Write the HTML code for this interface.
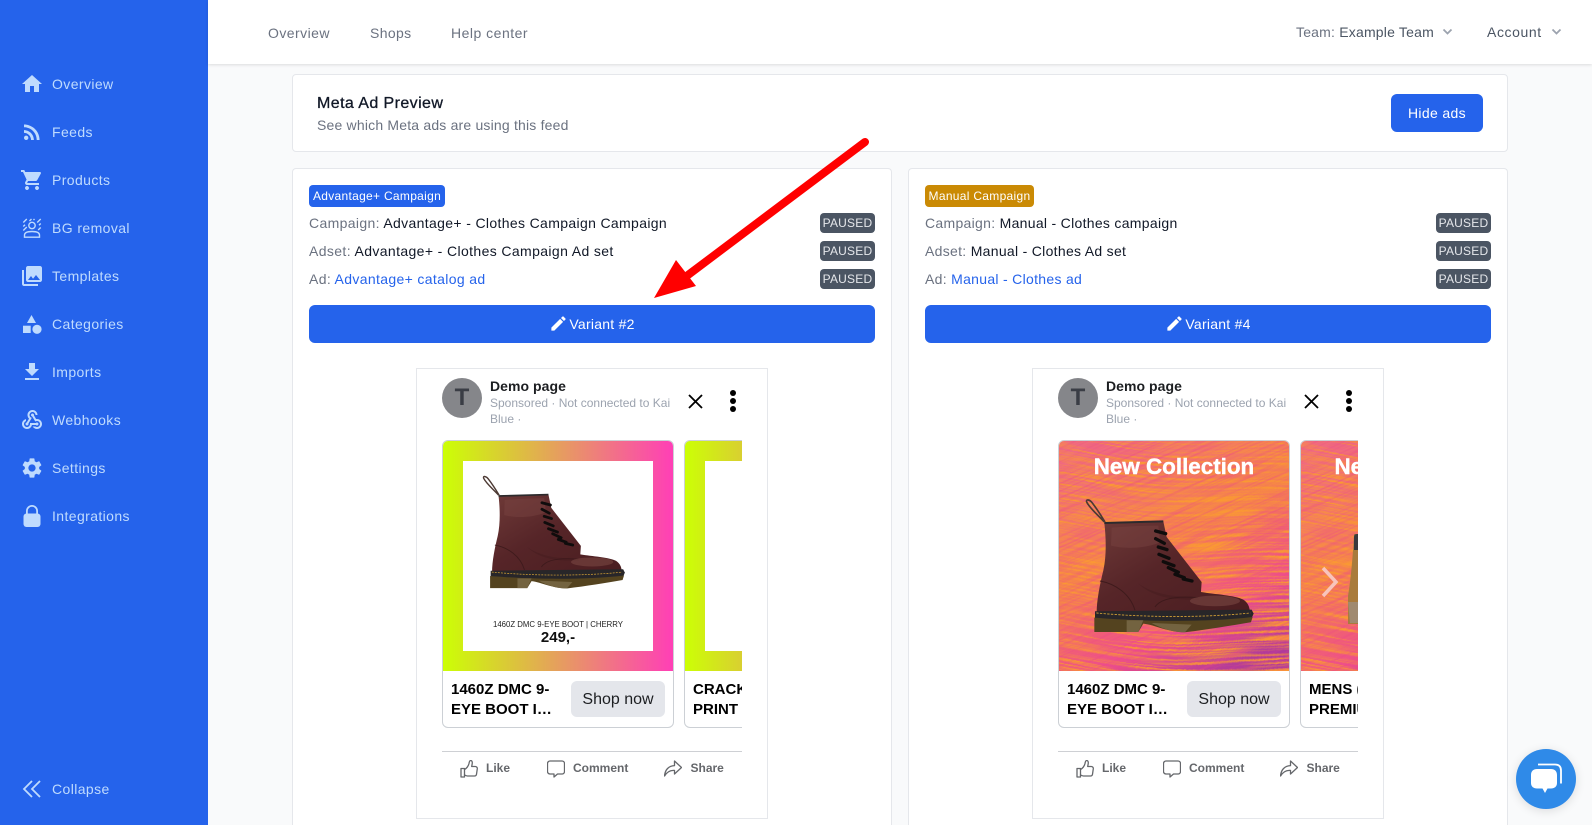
<!DOCTYPE html>
<html lang="en"><head><meta charset="utf-8"><title>Meta Ad Preview</title>
<style>
*{box-sizing:border-box;margin:0;padding:0}
html,body{width:1592px;height:825px;overflow:hidden;background:#f9fafb;font-family:"Liberation Sans",Arial,sans-serif;color:#111827}
#root{position:absolute;left:0;top:0;width:1592px;height:825px;overflow:hidden;background:#f9fafb}
.a{position:absolute}
.t{position:absolute;white-space:nowrap;line-height:20px;font-size:14px;letter-spacing:.35px}
#side{position:absolute;left:0;top:0;width:208px;height:825px;background:#2563eb}
#side svg{position:absolute;left:20px;width:24px;height:24px;fill:#bfdbfe}
#side .t{left:52px;color:#bfdbfe;letter-spacing:.4px}
#head{position:absolute;left:208px;top:0;width:1384px;height:64px;background:#fff;box-shadow:0 1px 3px rgba(0,0,0,.12);z-index:5}
.bd{position:absolute;background:#fff;border:1px solid #e5e7eb;border-radius:4px}
.col{position:absolute;top:168px;width:600px;height:657px;overflow:hidden}
.col>.bd{left:0;top:0;width:600px;height:657px;border-bottom:0;border-radius:4px 4px 0 0}
.badge{position:absolute;left:17px;top:17px;height:22px;border-radius:4px;color:#fff;font-size:12px;line-height:22px;text-align:center;letter-spacing:.3px;white-space:nowrap}
.k{color:#6b7280}.v{color:#111827}.l{color:#2563eb}
.p{position:absolute;left:528px;width:55px;height:20px;background:#4b5563;color:#e5e7eb;font-size:12px;line-height:20px;text-align:center;border-radius:4px;letter-spacing:.2px}
.btn{position:absolute;left:17px;top:137px;width:566px;height:38px;background:#2563eb;border-radius:6px;color:#fff;font-size:14px;line-height:38px;text-align:center;letter-spacing:.25px}
.btn svg{width:19px;height:19px;fill:#fff;vertical-align:-4px;margin-right:1px}
.frame{position:absolute;left:124px;top:199.500px;width:352px;height:451px;background:#fff;border:1px solid #e5e7eb}
.av{position:absolute;left:150px;top:210px;width:40px;height:40px;border-radius:50%;background:#85868a;color:#3a3d45;font-weight:700;font-size:24px;line-height:40px;text-align:center}
.dp{left:198px;top:208px;font-weight:700;font-size:14px;color:#1c1e21;letter-spacing:.05px}
.sp{left:198px;font-size:12px;color:#9ca3af;letter-spacing:0}
.car{position:absolute;left:150px;top:272px;width:300px;height:288px;overflow:hidden}
.cd{position:absolute;top:0;width:232px;height:288px;background:#fff;border:1px solid #ccd0d5;border-radius:6px;overflow:hidden}
.im{position:absolute;left:0;top:0;width:230px;height:230px;overflow:hidden}
.gr{background:linear-gradient(90deg,#ccff05,#ff3fb6)}
.wh{position:absolute;left:20px;top:20px;width:190px;height:190px;background:#fff}
.ti{position:absolute;left:8px;top:238.500px;font-weight:700;font-size:15px;line-height:20px;color:#000;white-space:nowrap}
.sh{position:absolute;left:128px;top:240px;width:94px;height:36px;background:#e4e6eb;border-radius:6px;font-size:16px;line-height:37px;text-align:center;color:#1c1e21}
.dv{position:absolute;left:150px;top:583px;width:300px;height:1px;background:#ced0d4}
.ac{top:590px;font-size:12px;font-weight:700;color:#65676b;letter-spacing:0}
.ic{position:absolute;top:592px;width:18px;height:18px;fill:none;stroke:#65676b;stroke-width:1.3;stroke-linejoin:round;stroke-linecap:round}
.x{position:absolute;left:395.500px;top:226px;width:15px;height:15px}
.dots{position:absolute;left:437px;top:221px;width:8px;height:24px}
.nv{color:#6b7280;top:22.500px}
</style></head><body>
<div id="root">
<svg width="0" height="0" style="position:absolute">
<defs>
<linearGradient id="lea" x1="0" y1="0" x2="1" y2="1"><stop offset="0" stop-color="#6f3a38"/><stop offset=".45" stop-color="#562528"/><stop offset="1" stop-color="#4a1d20"/></linearGradient>
<symbol id="boot" viewBox="90 170 520 415">
<path d="M148 245C130 225 105 205 95 185c-3-10 10-7 17 3 13 17 26 37 38 57" fill="none" stroke="#4d3a34" stroke-width="5"/>
<path d="M148 248l177-5 10 47 105 135-2 30c42 7 102 10 127 23 15 10 18 22 20 34l-460 6c0-38 10-88 20-128 10-45 8-100 3-142z" fill="url(#lea)"/>
<path d="M170 262c50-4 100-6 140-6l6 50c-50 20-110 20-148 10z" fill="#7a4442" opacity=".45"/>
<path d="M135 422c45 8 90 38 105 88" fill="none" stroke="#3e1a1c" stroke-width="3"/>
<path d="M300 500c20-30 80-32 130-28" fill="none" stroke="#3e1a1c" stroke-width="3"/>
<path d="M250 430c60 40 130 40 185 40l-3 8c-60 0-130 0-182-48z" fill="#3e1a1c" opacity=".35"/>
<ellipse cx="480" cy="482" rx="75" ry="16" fill="#7d4a46" opacity=".55"/>
<path d="M148 248l177-5" stroke="#2c2a2c" stroke-width="6" fill="none"/>
<path d="M120 513l470-5 6 12-6 14c-150 16-330 16-470 2z" fill="#282629"/>
<path d="M124 518c150 14 330 14 462 0" fill="none" stroke="#d7a336" stroke-width="2.500" stroke-dasharray="7 4"/>
<path d="M118 532c120 10 320 16 475-2l-5 16c-60 10-130 22-198 30-50 0-90-22-125-26l-15 25H118z" fill="#54431f"/>
<path d="M215 540h50l-15 35h-35zM290 548l120 5-20 23c-40 0-75-14-100-28z" fill="#7b6c48" opacity=".8"/>
<g stroke="#0f0c0c" stroke-width="10" stroke-linecap="round" fill="none"><path d="M302 272l30 8M302 295l26 14M310 320l26 8M312 342l30 12M325 364l32 12M340 382l30 14M360 402l28 10M385 416l26 6"/></g>
</symbol>
<linearGradient id="og" x1=".25" y1="0" x2=".75" y2="1"><stop offset="0" stop-color="#f06a80"/><stop offset=".42" stop-color="#f5804e"/><stop offset=".76" stop-color="#ee4f8a"/><stop offset="1" stop-color="#b03a9a"/></linearGradient>
<filter id="st" x="0" y="0" width="100%" height="100%" color-interpolation-filters="sRGB"><feTurbulence type="fractalNoise" baseFrequency="0.01 0.42" numOctaves="2" seed="4" result="n"/><feColorMatrix in="n" values="0 0 0 0 .98  0 0 0 0 .6  0 0 0 0 .2  3.4 0 0 0 -1.4" result="s"/><feTurbulence type="fractalNoise" baseFrequency="0.005" numOctaves="1" seed="2" result="w"/><feDisplacementMap in="s" in2="w" scale="40" xChannelSelector="R" yChannelSelector="G"/></filter>
<filter id="st2" x="0" y="0" width="100%" height="100%" color-interpolation-filters="sRGB"><feTurbulence type="fractalNoise" baseFrequency="0.012 0.42" numOctaves="2" seed="9" result="n"/><feColorMatrix in="n" values="0 0 0 0 .92  0 0 0 0 .27  0 0 0 0 .55  3.2 0 0 0 -1.4"/></filter>
<symbol id="fire" viewBox="0 0 230 230" preserveAspectRatio="none">
<rect width="230" height="230" fill="url(#og)"/>
<rect x="-80" y="-80" width="400" height="400" filter="url(#st)" transform="rotate(4 115 115)"/>
<rect x="-80" y="-80" width="400" height="400" filter="url(#st2)" transform="rotate(-24 115 115)" opacity=".4"/>
</symbol>
<symbol id="like" viewBox="0 0 18 18"><path d="M1 8.500h3.500V17H1z"/><path d="M4.500 9.500c2-1 4-3.500 4.500-6 .2-1.200.5-3 1.700-3 1.300 0 1.800 1.500 1.500 3.200l-.5 2.800h3.600c1.300 0 2.100 1 2 2.200l-.8 5.600c-.2 1.200-1 1.700-2 1.700H7.500c-1 0-2-.6-3-1"/></symbol>
<symbol id="com" viewBox="0 0 18 18"><path d="M3 1h12a2.500 2.500 0 0 1 2.500 2.500v8A2.500 2.500 0 0 1 15 14h-4.500L7 17v-3H3A2.500 2.500 0 0 1 .5 11.500v-8A2.500 2.500 0 0 1 3 1z"/></symbol>
<symbol id="shr" viewBox="0 0 18 18"><path d="M10.500 1l7 6.500-7 6.500v-3.600c-4.500-.4-7.500 1.400-10 5.600.5-6 4-10.200 10-10.400z"/></symbol>
<symbol id="pen" viewBox="0 0 24 24"><path d="M3 17.250V21h3.750L17.810 9.940l-3.750-3.750L3 17.250zM20.710 7.040c.39-.39.39-1.020 0-1.410l-2.340-2.340c-.39-.39-1.020-.39-1.410 0l-1.830 1.830 3.750 3.750 1.830-1.830z"/></symbol>
<symbol id="xx" viewBox="0 0 15 15"><path d="M1 1l13 13M14 1L1 14" stroke="#000" stroke-width="1.800" fill="none"/></symbol>
<symbol id="dd" viewBox="0 0 8 24"><circle cx="4" cy="4" r="3" fill="#000"/><circle cx="4" cy="12" r="3" fill="#000"/><circle cx="4" cy="20" r="3" fill="#000"/></symbol>
</defs></svg>

<div id="side">
<svg style="top:72px" viewBox="0 0 24 24"><path d="M10 20v-6h4v6h5v-8h3L12 3 2 12h3v8z"/></svg><div class="t" style="top:74px">Overview</div>
<svg style="top:120px" viewBox="0 0 24 24"><path d="M6.180 15.640a2.180 2.180 0 1 1 0 4.360 2.180 2.180 0 0 1 0-4.360zM4 4.440v2.830c7.030 0 12.730 5.700 12.730 12.730h2.830c0-8.590-6.970-15.560-15.560-15.560zm0 5.660v2.830c3.900 0 7.070 3.170 7.070 7.070h2.830c0-5.470-4.430-9.900-9.900-9.900z"/></svg><div class="t" style="top:122px">Feeds</div>
<svg style="top:168px" viewBox="0 0 24 24"><path d="M7 18c-1.100 0-1.990.9-1.990 2S5.900 22 7 22s2-.9 2-2-.9-2-2-2zM1 2v2h2l3.600 7.590-1.350 2.450c-.16.280-.25.610-.25.960 0 1.100.9 2 2 2h12v-2H7.420c-.14 0-.25-.11-.25-.25l.03-.12.9-1.630h7.450c.75 0 1.410-.41 1.750-1.030l3.580-6.490c.08-.14.120-.31.120-.48 0-.55-.45-1-1-1H5.210l-.94-2H1zm16 16c-1.100 0-1.990.9-1.990 2s.89 2 1.990 2 2-.9 2-2-.9-2-2-2z"/></svg><div class="t" style="top:170px">Products</div>
<svg style="top:216px" viewBox="0 0 24 24"><g fill="none" stroke="#bfdbfe" stroke-width="1.400"><circle cx="12" cy="9.500" r="3.200"/><path d="M4.500 21.200v-2c0-2.400 3-3.700 7.500-3.700s7.500 1.300 7.500 3.700v2z"/><path d="M3.300 6.500L6.800 3M3.300 10.500L5 8.800M3.300 14.500l3.500-3.500M9.500 5l2-2M20.700 3l-3.500 3.500M20.700 7.500L19 9.200M20.700 11.500l-2.500 2.500M14.500 3l-1 1"/></g></svg><div class="t" style="top:218px">BG removal</div>
<svg style="top:264px" viewBox="0 0 24 24"><path d="M22 16V4c0-1.100-.9-2-2-2H8c-1.100 0-2 .9-2 2v12c0 1.100.9 2 2 2h12c1.100 0 2-.9 2-2zm-11-4l2.030 2.710L16 11l4 5H8l3-4zM2 6v14c0 1.100.9 2 2 2h14v-2H4V6H2z"/></svg><div class="t" style="top:266px">Templates</div>
<svg style="top:312px" viewBox="0 0 24 24"><path d="M11.500 3l-4.500 8h9z"/><circle cx="17" cy="17.300" r="4.600"/><path d="M3 13.700h7.700V21H3z"/></svg><div class="t" style="top:314px">Categories</div>
<svg style="top:360px" viewBox="0 0 24 24"><path d="M19 9h-4V3H9v6H5l7 7 7-7zM5 18v2h14v-2H5z"/></svg><div class="t" style="top:362px">Imports</div>
<svg style="top:408px" viewBox="0 0 24 24"><path d="M10 15h5.880c.27-.31.67-.5 1.120-.5.830 0 1.500.670 1.500 1.500s-.67 1.500-1.500 1.500c-.44 0-.84-.19-1.120-.5H11.900c-.46 2.280-2.480 4-4.900 4-2.760 0-5-2.240-5-5 0-2.420 1.720-4.440 4-4.900v2.070c-1.160.41-2 1.530-2 2.830 0 1.650 1.350 3 3 3s3-1.350 3-3v-1zm2.500-11c1.650 0 3 1.350 3 3h2c0-2.760-2.240-5-5-5s-5 2.240-5 5c0 1.430.6 2.710 1.550 3.620l-2.350 3.900c-.68.14-1.200.75-1.200 1.480 0 .830.67 1.500 1.500 1.500s1.500-.67 1.500-1.500c0-.16-.02-.31-.07-.45l3.380-5.630C10.490 9.610 9.500 8.420 9.500 7c0-1.650 1.350-3 3-3zm4.500 9c-.64 0-1.230.2-1.720.54l-3.050-5.070C11.530 8.350 11 7.740 11 7c0-.83.67-1.500 1.500-1.500S14 6.170 14 7c0 .15-.02.29-.06.43l2.190 3.650c.28-.05.57-.08.87-.08 2.760 0 5 2.240 5 5s-2.240 5-5 5c-1.850 0-3.470-1.010-4.330-2.500h2.670c.48.32 1.050.5 1.660.5 1.650 0 3-1.350 3-3s-1.350-3-3-3z"/></svg><div class="t" style="top:410px">Webhooks</div>
<svg style="top:456px" viewBox="0 0 24 24"><path d="M19.140 12.940c.04-.3.060-.61.060-.94 0-.32-.02-.64-.07-.94l2.030-1.580c.18-.14.230-.41.120-.61l-1.920-3.320c-.12-.22-.37-.29-.59-.22l-2.390.96c-.5-.38-1.030-.7-1.620-.94l-.36-2.540c-.04-.24-.24-.41-.48-.41h-3.840c-.24 0-.43.170-.47.410l-.36 2.540c-.59.240-1.130.570-1.620.940l-2.390-.96c-.22-.08-.47 0-.59.220L2.740 8.870c-.12.210-.08.470.120.610l2.030 1.580c-.05.3-.09.630-.09.940s.02.640.07.940l-2.030 1.580c-.18.140-.23.410-.12.610l1.920 3.320c.12.220.37.290.59.220l2.390-.96c.5.380 1.030.7 1.620.94l.36 2.540c.05.240.24.410.48.410h3.840c.24 0 .44-.17.47-.41l.36-2.540c.59-.24 1.130-.56 1.620-.94l2.390.96c.22.080.47 0 .59-.22l1.920-3.320c.12-.22.070-.47-.12-.61l-2.010-1.580zM12 15.600c-1.980 0-3.600-1.620-3.600-3.600s1.620-3.600 3.600-3.600 3.600 1.620 3.600 3.600-1.620 3.600-3.600 3.600z"/></svg><div class="t" style="top:458px">Settings</div>
<svg style="top:504px" viewBox="0 0 24 24"><path d="M6 11V7a6 6 0 0 1 12 0v4h-1.800V7a4.200 4.200 0 0 0-8.400 0v4z"/><rect x="3.500" y="9.500" width="17" height="13.500" rx="3"/></svg><div class="t" style="top:506px">Integrations</div>
<svg style="top:777px" viewBox="0 0 24 24"><path d="M12 4l-8 8 8 8M20 4l-8 8 8 8" fill="none" stroke="#bfdbfe" stroke-width="1.800"/></svg><div class="t" style="top:779px">Collapse</div>
</div>

<div id="head">
<div class="t nv" style="left:60px;letter-spacing:.45px">Overview</div>
<div class="t nv" style="left:162px">Shops</div>
<div class="t nv" style="left:243px;letter-spacing:.5px">Help center</div>
<div class="t" style="left:1088px;top:22px;color:#6b7280;letter-spacing:.2px">Team: <span style="color:#4b5563">Example Team</span></div>
<svg class="a" style="left:1234px;top:28px" width="11" height="8" viewBox="0 0 11 8"><path d="M1.500 1.500l4 4 4-4" fill="none" stroke="#9ca3af" stroke-width="1.800"/></svg>
<div class="t" style="left:1279px;top:22px;color:#4b5563;letter-spacing:.6px">Account</div>
<svg class="a" style="left:1343px;top:28px" width="11" height="8" viewBox="0 0 11 8"><path d="M1.500 1.500l4 4 4-4" fill="none" stroke="#9ca3af" stroke-width="1.800"/></svg>
</div>

<div class="bd" style="left:292px;top:74px;width:1216px;height:78px"></div>
<div class="t" style="left:317px;top:93.500px;font-size:16px;color:#111827;letter-spacing:.42px;-webkit-text-stroke:.3px #111827">Meta Ad Preview</div>
<div class="t" style="left:317px;top:115px;color:#6b7280;letter-spacing:.19px">See which Meta ads are using this feed</div>
<div class="a" style="left:1391px;top:94px;width:92px;height:38px;background:#2563eb;border-radius:6px;color:#fff;font-size:14px;line-height:38px;text-align:center;letter-spacing:.35px">Hide ads</div>

<div class="col" style="left:292px">
<div class="bd"></div>
<div class="badge" style="width:136px;background:#2563eb">Advantage+ Campaign</div>
<div class="t" style="left:17px;top:45px"><span class="k">Campaign:</span> <span class="v">Advantage+ - Clothes Campaign Campaign</span></div>
<div class="t" style="left:17px;top:73px;letter-spacing:.38px"><span class="k">Adset:</span> <span class="v">Advantage+ - Clothes Campaign Ad set</span></div>
<div class="t" style="left:17px;top:101px"><span class="k">Ad:</span> <span class="l">Advantage+ catalog ad</span></div>
<div class="p" style="top:45px">PAUSED</div><div class="p" style="top:73px">PAUSED</div><div class="p" style="top:101px">PAUSED</div>
<div class="btn"><svg><use href="#pen"/></svg>Variant #2</div>
<div class="frame"></div>
<div class="av">T</div>
<div class="t dp">Demo page</div>
<div class="t sp" style="top:225px">Sponsored · Not connected to Kai</div>
<div class="t sp" style="top:240.500px">Blue ·</div>
<svg class="x"><use href="#xx"/></svg><svg class="dots"><use href="#dd"/></svg>
<div class="car">
 <div class="cd" style="left:0">
  <div class="im gr"><div class="wh"></div>
   <svg class="a" style="left:39px;top:33px" width="147" height="117"><use href="#boot" width="147" height="117"/></svg>
   <div class="a" style="left:20px;width:190px;top:179px;text-align:center;font-size:7.800px;line-height:10px;color:#222;white-space:nowrap">1460Z DMC 9-EYE BOOT | CHERRY</div>
   <div class="a" style="left:20px;width:190px;top:189px;text-align:center;font-size:15px;line-height:16px;font-weight:700;color:#111">249,-</div>
  </div>
  <div class="ti">1460Z DMC 9-<br>EYE BOOT I…</div><div class="sh">Shop now</div>
 </div>
 <div class="cd" style="left:242px">
  <div class="im gr"><div class="wh"></div></div>
  <div class="ti">CRACK<br>PRINT</div>
 </div>
</div>
<svg class="a" style="left:412px;top:397px" width="20" height="34" viewBox="0 0 20 34"><path d="M2 2l15 15L2 32" fill="none" stroke="#fff" stroke-opacity=".85" stroke-width="1.200"/></svg>
<div class="dv"></div>
<svg class="ic" style="left:168px"><use href="#like"/></svg><div class="t ac" style="left:194px">Like</div>
<svg class="ic" style="left:255px"><use href="#com"/></svg><div class="t ac" style="left:281px">Comment</div>
<svg class="ic" style="left:372px"><use href="#shr"/></svg><div class="t ac" style="left:398.500px">Share</div>
</div>

<div class="col" style="left:908px">
<div class="bd"></div>
<div class="badge" style="width:109px;background:#ca8a04">Manual Campaign</div>
<div class="t" style="left:17px;top:45px;letter-spacing:.3px"><span class="k">Campaign:</span> <span class="v">Manual - Clothes campaign</span></div>
<div class="t" style="left:17px;top:73px;letter-spacing:.3px"><span class="k">Adset:</span> <span class="v">Manual - Clothes Ad set</span></div>
<div class="t" style="left:17px;top:101px;letter-spacing:.3px"><span class="k">Ad:</span> <span class="l">Manual - Clothes ad</span></div>
<div class="p" style="top:45px">PAUSED</div><div class="p" style="top:73px">PAUSED</div><div class="p" style="top:101px">PAUSED</div>
<div class="btn"><svg><use href="#pen"/></svg>Variant #4</div>
<div class="frame"></div>
<div class="av">T</div>
<div class="t dp">Demo page</div>
<div class="t sp" style="top:225px">Sponsored · Not connected to Kai</div>
<div class="t sp" style="top:240.500px">Blue ·</div>
<svg class="x"><use href="#xx"/></svg><svg class="dots"><use href="#dd"/></svg>
<div class="car">
 <div class="cd" style="left:0">
  <div class="im"><svg width="230" height="230"><use href="#fire" width="230" height="230"/></svg>
   <div class="a" style="left:0;width:230px;top:13px;text-align:center;font-size:22.400px;line-height:26px;font-weight:700;color:#fff;white-space:nowrap;-webkit-text-stroke:.4px #fff">New Collection</div>
   <svg class="a" style="left:26px;top:55.700px" width="173.300" height="138.300"><use href="#boot" width="173.300" height="138.300"/></svg>
  </div>
  <div class="ti">1460Z DMC 9-<br>EYE BOOT I…</div><div class="sh">Shop now</div>
 </div>
 <div class="cd" style="left:242px">
  <div class="im"><svg width="230" height="230"><use href="#fire" width="230" height="230"/></svg>
   <div class="a" style="left:33.500px;top:13px;font-size:22.400px;line-height:26px;font-weight:700;color:#fff;white-space:nowrap;-webkit-text-stroke:.4px #fff">New Collection</div>
   <svg class="a" style="left:47px;top:93px" width="20" height="90" viewBox="0 0 20 90"><path d="M6 0h14v90H0V62C3 45 5 20 6 0z" fill="#a97b3c"/><path d="M6 3q0-3 3-3h11v16H6z" fill="#3a3a3e"/><path d="M0 68h20v21H2z" fill="#a08a70"/></svg>
  </div>
  <div class="ti">MENS (<br>PREMIUM</div>
 </div>
</div>
<svg class="a" style="left:412px;top:397px" width="20" height="34" viewBox="0 0 20 34"><path d="M3 3l13 14L3 31" fill="none" stroke="#f8c4bc" stroke-width="3.500"/></svg>
<div class="dv"></div>
<svg class="ic" style="left:168px"><use href="#like"/></svg><div class="t ac" style="left:194px">Like</div>
<svg class="ic" style="left:255px"><use href="#com"/></svg><div class="t ac" style="left:281px">Comment</div>
<svg class="ic" style="left:372px"><use href="#shr"/></svg><div class="t ac" style="left:398.500px">Share</div>
</div>

<svg class="a" style="left:0;top:0;z-index:6;pointer-events:none" width="1592" height="825">
<path d="M865 142L688 275" stroke="#f00" stroke-width="8" stroke-linecap="round"/>
<path d="M654 298L676 260L696 286z" fill="#f00"/>
</svg>

<div class="a" style="left:1516px;top:749px;width:60px;height:60px;border-radius:50%;background:#2f8ae8;box-shadow:0 2px 10px rgba(0,0,0,.12);z-index:7">
<svg width="60" height="60" viewBox="0 0 60 60"><path d="M22 15.500h17c4 0 6 2 6 6v13" fill="none" stroke="#fff" stroke-width="1.800"/><path d="M21 20h14c3.500 0 6 2 6 6v8c0 3.500-2.500 5.500-6 5.500h-3.500L29 44l-2.500-4.500H21c-3.500 0-6-2-6-5.500v-8c0-4 2.500-6 6-6z" fill="#fff"/></svg>
</div>
</div>
</body></html>
